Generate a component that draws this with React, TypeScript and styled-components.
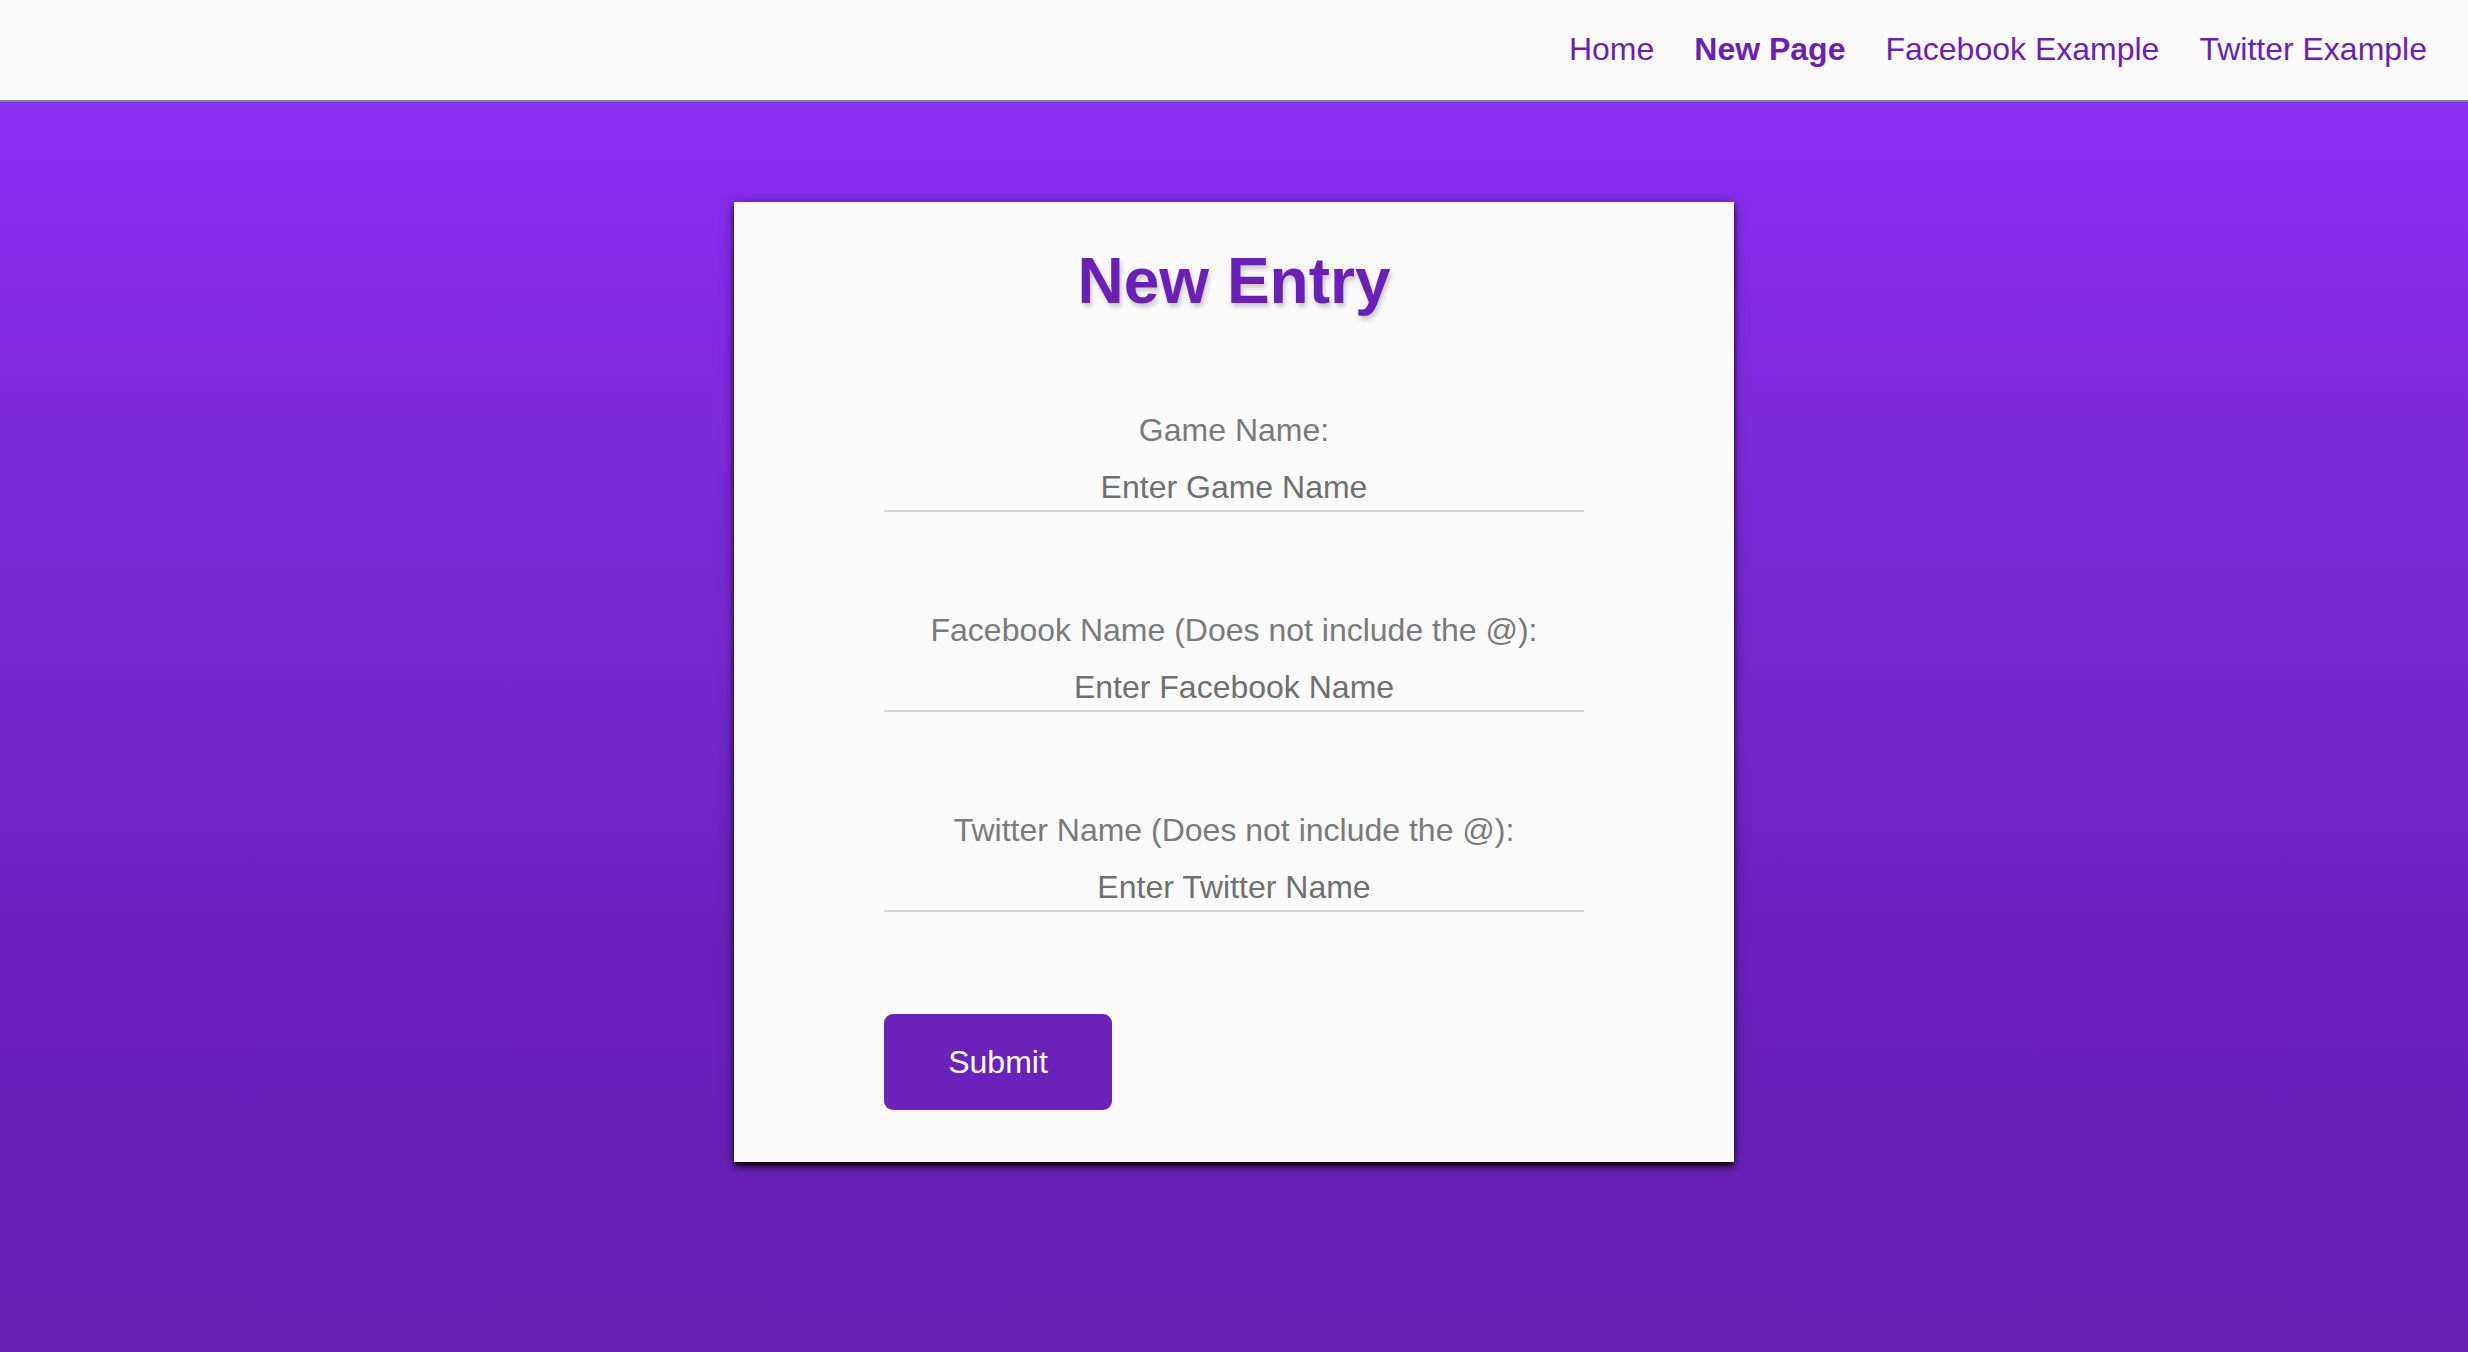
import React from "react";
import styled, { createGlobalStyle } from "styled-components";

const GlobalStyle = createGlobalStyle`
  html, body {
    margin: 0;
    padding: 0;
  }
  body {
    font-family: "Liberation Sans", Arial, Helvetica, sans-serif;
    background: #6620b4;
  }
  * { box-sizing: border-box; }
`;

const Page = styled.div`
  min-height: 100vh;
  display: flex;
  flex-direction: column;
`;

const NavBar = styled.nav`
  height: 102px;
  flex: 0 0 auto;
  background: #fafafa;
  border-bottom: 2px solid #808080;
  display: flex;
  justify-content: flex-end;
  align-items: center;
  padding-right: 41px;
  gap: 40px;
`;

const NavLink = styled.a<{ $active?: boolean }>`
  font-size: 32px;
  line-height: 37px;
  color: #6a1fb8;
  text-decoration: none;
  font-weight: ${(p) => (p.$active ? 700 : 400)};
  cursor: pointer;
  margin-top: -1px;
`;

const Main = styled.main`
  flex: 1 1 auto;
  background: linear-gradient(180deg, #8b2ef4 0%, #7a29d6 35%, #6921b9 70%, #6620b4 100%);
  padding: 100px 0 120px;
`;

const Card = styled.section`
  width: 1000px;
  margin: 0 auto;
  background: #fafafa;
  padding: 42px 0 52px;
  box-shadow: 0 4px 5px rgba(0, 0, 0, 0.85), 0 2px 14px rgba(0, 0, 0, 0.35);
`;

const Title = styled.h1`
  margin: 0;
  font-size: 64px;
  line-height: 74px;
  font-weight: 700;
  text-align: center;
  color: #6a20b8;
  text-shadow: 2px 4px 4px rgba(0, 0, 0, 0.18);
`;

const Form = styled.form`
  width: 700px;
  margin: 94px auto 0;
  display: flex;
  flex-direction: column;
  gap: 100px;
`;

const Field = styled.div`
  display: flex;
  flex-direction: column;
  gap: 16px;
`;

const Label = styled.label`
  font-size: 32px;
  line-height: 37px;
  text-align: center;
  color: #7a7a7a;
`;

const Input = styled.input`
  width: 100%;
  font-family: inherit;
  font-size: 32px;
  line-height: 37px;
  height: 47px;
  padding: 4px 0;
  border: none;
  border-bottom: 2px solid #d3d3d3;
  background: transparent;
  text-align: center;
  color: #444;
  outline: none;
  &::placeholder {
    color: #707070;
    opacity: 1;
  }
`;

const SubmitButton = styled.button`
  align-self: flex-start;
  margin-top: 2px;
  width: 228px;
  height: 96px;
  border: none;
  border-radius: 9px;
  background: #6a22b8;
  color: #ffffff;
  font-family: inherit;
  font-size: 32px;
  line-height: 37px;
  cursor: pointer;
`;

const fields = [
  { id: "game", label: "Game Name:", placeholder: "Enter Game Name" },
  {
    id: "facebook",
    label: "Facebook Name (Does not include the @):",
    placeholder: "Enter Facebook Name",
  },
  {
    id: "twitter",
    label: "Twitter Name (Does not include the @):",
    placeholder: "Enter Twitter Name",
  },
];

export default function App() {
  return (
    <>
      <GlobalStyle />
      <Page>
        <NavBar>
          <NavLink>Home</NavLink>
          <NavLink $active>New Page</NavLink>
          <NavLink>Facebook Example</NavLink>
          <NavLink>Twitter Example</NavLink>
        </NavBar>
        <Main>
          <Card>
            <Title>New Entry</Title>
            <Form onSubmit={(e) => e.preventDefault()}>
              {fields.map((f) => (
                <Field key={f.id}>
                  <Label htmlFor={f.id}>{f.label}</Label>
                  <Input id={f.id} type="text" placeholder={f.placeholder} />
                </Field>
              ))}
              <SubmitButton type="submit">Submit</SubmitButton>
            </Form>
          </Card>
        </Main>
      </Page>
    </>
  );
}
